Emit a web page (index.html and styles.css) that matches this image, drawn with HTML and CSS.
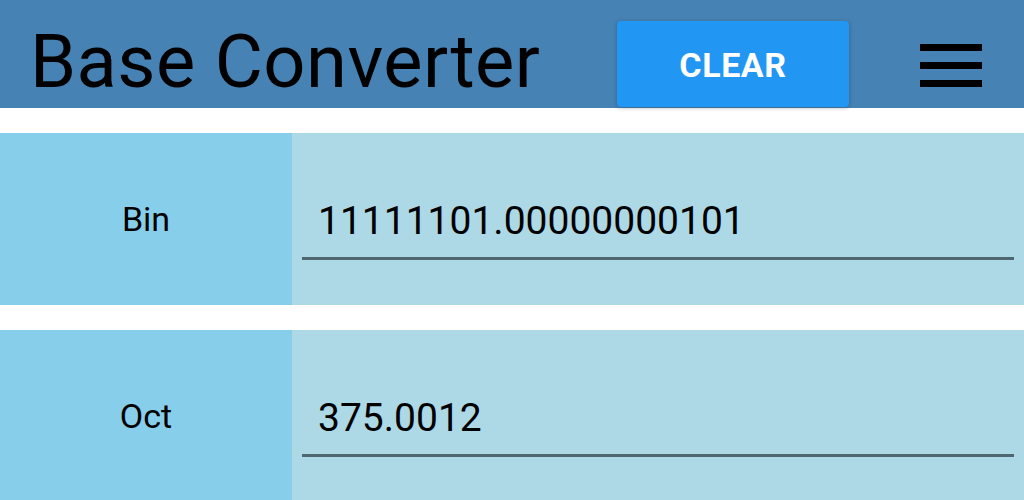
FILE: index.html
```html
<!DOCTYPE html>
<html>
<head>
<meta charset="utf-8">
<link rel="stylesheet" href="styles.css">
</head>
<body>
<header class="appbar">
  <h1 class="title">Base Converter</h1>
  <button class="clear-btn">CLEAR</button>
  <div class="menu">
    <span class="bar"></span><span class="bar"></span><span class="bar"></span>
  </div>
</header>
<main class="rows">
  <div class="row">
    <div class="label">Bin</div>
    <div class="field"><div class="input">11111101.00000000101</div></div>
  </div>
  <div class="row">
    <div class="label">Oct</div>
    <div class="field"><div class="input">375.0012</div></div>
  </div>
</main>
</body>
</html>
```
FILE: styles.css
```css
* { box-sizing: border-box; }
html, body { margin: 0; padding: 0; }
body {
  width: 1024px;
  height: 500px;
  overflow: hidden;
  background: #ffffff;
  font-family: Roboto, "Liberation Sans", sans-serif;
  color: #000;
}
.appbar {
  height: 108px;
  background: #4682b4;
  display: flex;
  align-items: flex-end;
}
.title {
  margin: 0 0 0 30px;
  padding-top: 16px;
  font-weight: 400;
  font-size: 74px;
  line-height: 92px;
  height: 108px;
  letter-spacing: 0.5px;
  flex: 0 0 auto;
}
.clear-btn {
  margin-left: auto;
  margin-bottom: 1px;
  width: 232px;
  height: 86px;
  background: #2196f3;
  color: #fff;
  border: none;
  border-radius: 4px;
  font-family: Roboto, "Liberation Sans", sans-serif;
  font-weight: 700;
  font-size: 34px;
  letter-spacing: 0.6px;
  box-shadow: 0 1px 4px rgba(0,0,0,0.25);
  padding: 2px 0 0;
}
.menu {
  margin-left: 71px;
  margin-right: 42px;
  align-self: center;
  width: 62px;
  display: flex;
  flex-direction: column;
  gap: 11px;
  margin-top: 22px;
}
.bar {
  display: block;
  height: 7px;
  background: #000;
}
.rows {
  display: flex;
  flex-direction: column;
  gap: 25px;
  padding-top: 25px;
}
.row {
  display: flex;
  height: 172px;
  flex: 0 0 auto;
}
.label {
  width: 292px;
  background: #87ceeb;
  display: flex;
  align-items: center;
  justify-content: center;
  font-size: 34px;
}
.field {
  flex: 1;
  background: #add8e6;
  padding: 0 10px;
  display: flex;
  align-items: center;
}
.input {
  width: 100%;
  font-size: 39px;
  padding: 16px 16px 0;
  height: 78px;
  margin-top: 4px;
  border-bottom: 3px solid #4d666f;
  line-height: 46px;
}
```
